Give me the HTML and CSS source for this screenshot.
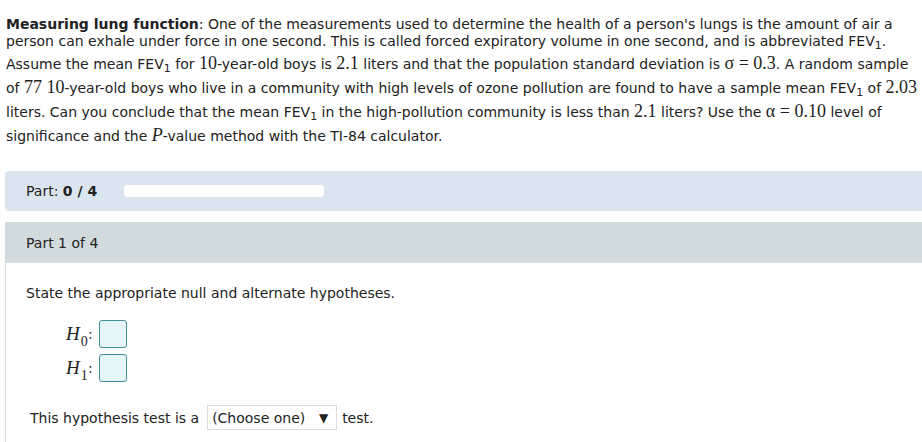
FILE: index.html
```html
<!DOCTYPE html>
<html>
<head>
<meta charset="utf-8">
<link rel="stylesheet" href="styles.css">
</head>
<body>
<div class="problem">
  <div class="ln ln1"><b>Measuring lung function</b>: One of the measurements used to determine the health of a person's lungs is the amount of air a</div>
  <div class="ln ln2">person can exhale under force in one second. This is called forced expiratory volume in one second, and is abbreviated FEV<sub>1</sub>.</div>
  <div class="ln lnm">Assume the mean FEV<sub>1</sub> for <span class="m">10</span>-year-old boys is <span class="m">2.1</span> liters and that the population standard deviation is <span class="m">σ = 0.3</span>. A random sample</div>
  <div class="ln lnm">of <span class="m">77</span> <span class="m">10</span>-year-old boys who live in a community with high levels of ozone pollution are found to have a sample mean FEV<sub>1</sub> of <span class="m">2.03</span></div>
  <div class="ln lnm">liters. Can you conclude that the mean FEV<sub>1</sub> in the high-pollution community is less than <span class="m">2.1</span> liters? Use the <span class="m">α = 0.10</span> level of</div>
  <div class="ln lnm">significance and the <span class="m mi">P</span>-value method with the TI-84 calculator.</div>
</div>

<div class="partbar">
  <span class="partlabel">Part: <b>0 / 4</b></span>
  <span class="progress"></span>
</div>

<div class="part">
  <div class="parthead">Part 1 of 4</div>
  <div class="partbody">
    <div class="prompt">State the appropriate null and alternate hypotheses.</div>
    <div class="hyps">
      <div class="hyp"><span class="hv"><i>H</i><sub>0</sub></span><span class="colon">:</span><span class="box"></span></div>
      <div class="hyp"><span class="hv"><i>H</i><sub>1</sub></span><span class="colon">:</span><span class="box"></span></div>
    </div>
    <div class="testline">
      <span class="tl">This hypothesis test is a</span>
      <span class="select">(Choose one) <span class="arrow">▼</span></span>
      <span class="after">test.</span>
    </div>
  </div>
</div>
</body>
</html>
```

FILE: styles.css
```css
html, body {
  margin: 0;
  padding: 0;
  background: #ffffff;
}
body {
  font-family: "DejaVu Sans", Verdana, sans-serif;
  font-size: 14px;
  color: #222222;
  width: 922px;
  overflow: hidden;
}
.problem {
  padding: 16px 0 0 6px;
}
.ln {
  display: block;
  white-space: nowrap;
}
.ln1 { height: 17px; line-height: 17px; }
.ln2 { height: 18px; line-height: 17px; }
.lnm { height: 24px; line-height: 24px; }
sub {
  font-size: 11px;
  vertical-align: -3px;
  line-height: 0;
}
.m {
  font-family: "Liberation Serif", "Times New Roman", serif;
  font-size: 18px;
}
.mi { font-style: italic; }

.partbar {
  margin: 24px 0 0 5px;
  height: 40px;
  background: #dae5ef;
  border-radius: 4px 0 0 4px;
  display: flex;
  align-items: center;
  padding-left: 21px;
  gap: 27px;
}
.partlabel { color: #222; }
.progress {
  width: 200px;
  height: 12px;
  background: #ffffff;
  border-radius: 3px;
}

.part {
  margin: 11px 0 0 5px;
}
.parthead {
  height: 41px;
  background: #d1dadd;
  display: flex;
  align-items: center;
  padding-left: 21px;
  color: #222;
}
.partbody {
  border-left: 1px solid #dddddd;
  padding: 22px 0 20px 20px;
}
.prompt {
  line-height: 16px;
}
.hyps {
  margin: 19px 0 0 40px;
  display: flex;
  flex-direction: column;
  gap: 6px;
}
.hyp {
  display: flex;
  align-items: center;
  height: 28px;
}
.hv {
  font-family: "Liberation Serif", "Times New Roman", serif;
  font-size: 19px;
  width: 22px;
  white-space: nowrap;
}
.hv sub {
  font-size: 14px;
  vertical-align: -6px;
  margin-left: 1px;
}
.colon {
  font-size: 14px;
  width: 11px;
}
.box {
  width: 26px;
  height: 26px;
  background: #e6f3f7;
  border: 1px solid #3f8e98;
  border-radius: 3px;
}
.testline {
  margin-top: 23px;
  margin-left: 4px;
  display: flex;
  align-items: center;
}
.tl {
  font-size: 14px;
}
.select {
  margin-left: 8px;
  border: 1px solid #dddddd;
  height: 23px;
  width: 116px;
  padding: 0 8px 0 4px;
  display: flex;
  align-items: center;
  justify-content: space-between;
  font-size: 14px;
  color: #222;
}
.arrow { font-size: 12px; }
.after {
  margin-left: 5px;
  font-size: 14px;
}
```
